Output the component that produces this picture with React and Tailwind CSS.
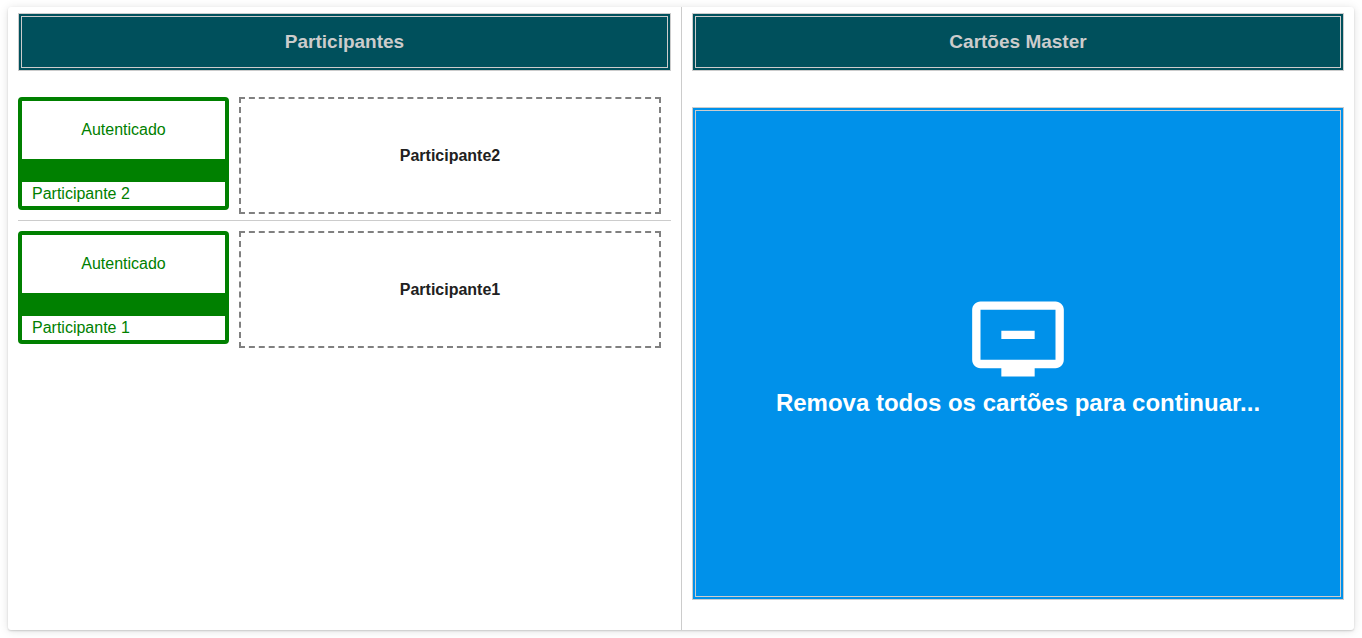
import React from "react";

const participants = [
  { id: 2, label: "Participante 2", name: "Participante2" },
  { id: 1, label: "Participante 1", name: "Participante1" },
];

function PanelTitle({ children }) {
  return (
    <h3 className="border-4 border-double border-[#ccc] bg-[#00505c] py-[13px] text-center text-[19px] leading-6 font-bold text-[#ccc]">
      {children}
    </h3>
  );
}

function ParticipantRow({ label, name }) {
  return (
    <li className="border-b border-[#ccc] pt-[10px] pb-[6px] last:border-b-0">
      <div className="grid grid-cols-[1fr_2fr] items-start gap-[10px] pr-[10px]">
        <div className="overflow-hidden rounded border-4 border-[#008000] bg-[#008000] text-[#008000]">
          <div className="flex h-[58px] items-center justify-center bg-white">Autenticado</div>
          <div className="mt-[23px] bg-white px-[10px] leading-6">{label}</div>
        </div>
        <div className="flex h-[117px] items-center justify-center border-2 border-dashed border-[#808080] font-bold text-[#212121]">
          {name}
        </div>
      </div>
    </li>
  );
}

function RemoveFromQueueIcon() {
  return (
    <svg viewBox="0 0 24 24" className="size-[100px] fill-current" aria-hidden="true">
      <path d="M21 3H3c-1.11 0-2 .89-2 2v12c0 1.1.89 2 2 2h5v2h8v-2h5c1.1 0 1.99-.9 1.99-2L23 5c0-1.11-.9-2-2-2zm0 14H3V5h18v12zm-5-7v2H8v-2h8z" />
    </svg>
  );
}

export default function App() {
  return (
    <main className="flex min-h-screen flex-col bg-white px-2 pt-[7px] pb-2 font-['Liberation_Sans',Arial,sans-serif] text-base">
      <div className="grid flex-1 grid-cols-2 rounded-[3px] bg-white shadow-[0_1px_2px_0_rgba(0,0,0,0.16),0_1px_10px_0_rgba(0,0,0,0.12)]">
        <section className="px-[10px] pt-[6px] pb-[10px]">
          <PanelTitle>Participantes</PanelTitle>
          <ul className="mt-4">
            {participants.map((p) => (
              <ParticipantRow key={p.id} label={p.label} name={p.name} />
            ))}
          </ul>
        </section>
        <section className="flex flex-col border-l border-[#ccc] px-[10px] pt-[6px] pb-[30px]">
          <PanelTitle>Cartões Master</PanelTitle>
          <div className="mt-9 flex flex-1 flex-col items-center justify-center border-4 border-double border-[#ccc] bg-[#0091ea] pb-[2px] text-white">
            <RemoveFromQueueIcon />
            <p className="text-center text-2xl leading-7 font-bold">Remova todos os cartões para continuar...</p>
          </div>
        </section>
      </div>
    </main>
  );
}
